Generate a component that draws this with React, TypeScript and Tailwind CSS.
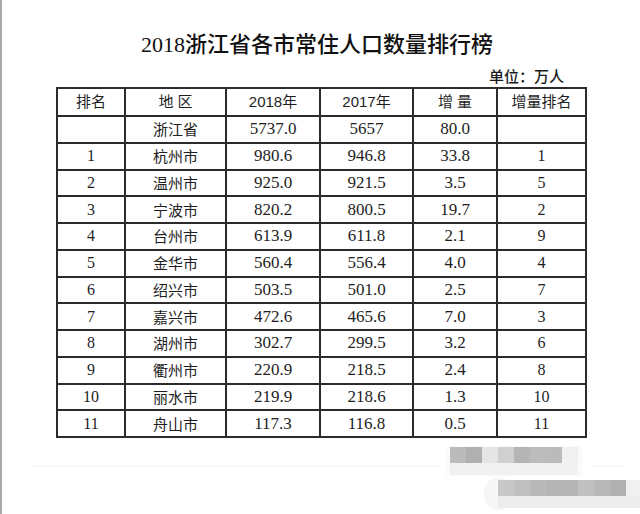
import React from "react";

const rows: [string, string, string, string, string, string][] = [
  ["", "浙江省", "5737.0", "5657", "80.0", ""],
  ["1", "杭州市", "980.6", "946.8", "33.8", "1"],
  ["2", "温州市", "925.0", "921.5", "3.5", "5"],
  ["3", "宁波市", "820.2", "800.5", "19.7", "2"],
  ["4", "台州市", "613.9", "611.8", "2.1", "9"],
  ["5", "金华市", "560.4", "556.4", "4.0", "4"],
  ["6", "绍兴市", "503.5", "501.0", "2.5", "7"],
  ["7", "嘉兴市", "472.6", "465.6", "7.0", "3"],
  ["8", "湖州市", "302.7", "299.5", "3.2", "6"],
  ["9", "衢州市", "220.9", "218.5", "2.4", "8"],
  ["10", "丽水市", "219.9", "218.6", "1.3", "10"],
  ["11", "舟山市", "117.3", "116.8", "0.5", "11"],
];

const serif = "font-['Liberation_Serif','Noto_Sans_CJK_SC',serif]";
const sans = "font-['Liberation_Sans','Noto_Sans_CJK_SC',sans-serif]";

function Watermark() {
  const top = [
    [448, "#bbbbbb"], [464, "#b0b0b0"], [480, "#e5e5e5"], [496, "#d0d0d0"],
    [512, "#b5b5b5"], [528, "#bcbcbc"], [544, "#bbbbbb"], [560, "#f0f0f0"],
  ] as const;
  const bottom = [
    [496, "#c8c8c8"], [512, "#c0c0c0"], [528, "#b8b8b8"], [544, "#b5b5b5"], [560, "#b5b5b5"],
    [576, "#c0c0c0"], [592, "#b8b8b8"], [608, "#b0b0b0"], [624, "#f0f0f0"],
  ] as const;
  return (
    <svg className="absolute left-0 top-0" width="640" height="514" viewBox="0 0 640 514">
      <rect x="30" y="465" width="410" height="2" fill="#f7f7f7" />
      <rect x="590" y="465" width="30" height="2" fill="#f7f7f7" />
      <rect x="444" y="446" width="136" height="30" fill="#fafafa" />
      {top.map(([x, c]) => (
        <rect key={"t" + x} x={x} y={447} width={16} height={16} fill={c} />
      ))}
      {top.map(([x]) => (
        <rect key={"tl" + x} x={x} y={463} width={16} height={12} fill="#f1f1f1" />
      ))}
      <rect x="482" y="478" width="30" height="32" rx="14" fill="#f6f6f6" />
      {bottom.map(([x, c]) => (
        <rect key={"b" + x} x={x} y={480} width={16} height={16} fill={c} />
      ))}
      {bottom.map(([x]) => (
        <rect key={"bl" + x} x={x} y={496} width={16} height={12} fill="#ededed" />
      ))}
    </svg>
  );
}

export default function App() {
  const cell = "border-2 border-[#2b2b2b] p-0 text-center align-middle text-[#1e1e1e]";
  return (
    <div className="relative w-[640px] h-[514px] overflow-hidden bg-white border-l-2 border-[#a8a8a8]">
      <Watermark />
      <div className="relative flex flex-col">
        <div
          className={`pt-[32px] pl-[139px] text-[22px] leading-[26px] font-medium text-[#111] ${serif}`}
        >
          2018浙江省各市常住人口数量排行榜
        </div>
        <div className="mt-[9px] pr-[76px] text-right text-[15px] leading-[18px] font-medium text-[#1a1a1a] font-['Noto_Sans_CJK_SC',sans-serif]">
          单位：万人
        </div>
        <table className="mt-[2px] ml-[54px] w-[529px] table-fixed border-collapse">
          <colgroup>
            <col className="w-[68px]" />
            <col className="w-[101px]" />
            <col className="w-[94px]" />
            <col className="w-[93px]" />
            <col className="w-[84px]" />
            <col className="w-[89px]" />
          </colgroup>
          <thead>
            <tr className="h-[28px]">
              {["排名", "地 区", "2018年", "2017年", "增 量", "增量排名"].map((h) => (
                <th
                  key={h}
                  className={`${cell} font-normal text-[15px] leading-[18px] whitespace-pre ${sans}`}
                >
                  {h}
                </th>
              ))}
            </tr>
          </thead>
          <tbody>
            {rows.map((r, i) => (
              <tr key={i} className="h-[26.75px]">
                <td className={`${cell} text-[16px] leading-[18px] ${serif}`}>{r[0]}</td>
                <td className={`${cell} text-[15px] leading-[18px] font-['Noto_Sans_CJK_SC',sans-serif]`}>
                  {r[1]}
                </td>
                <td className={`${cell} text-[17px] leading-[18px] ${serif}`}>{r[2]}</td>
                <td className={`${cell} text-[17px] leading-[18px] ${serif}`}>{r[3]}</td>
                <td className={`${cell} text-[17px] leading-[18px] ${serif}`}>{r[4]}</td>
                <td className={`${cell} text-[16px] leading-[18px] ${serif}`}>{r[5]}</td>
              </tr>
            ))}
          </tbody>
        </table>
      </div>
    </div>
  );
}
